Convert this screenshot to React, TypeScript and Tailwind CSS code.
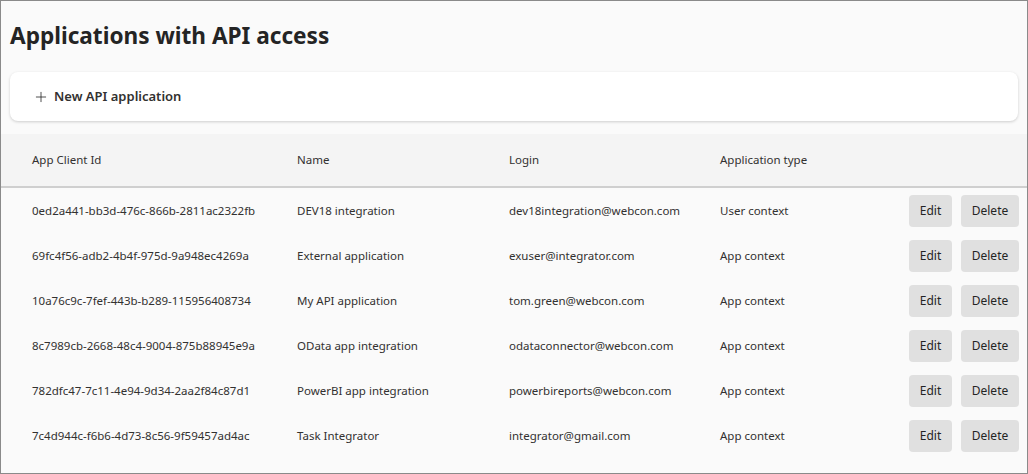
import { Plus } from "lucide-react";

const rows = [
  ["0ed2a441-bb3d-476c-866b-2811ac2322fb", "DEV18 integration", "dev18integration@webcon.com", "User context"],
  ["69fc4f56-adb2-4b4f-975d-9a948ec4269a", "External application", "exuser@integrator.com", "App context"],
  ["10a76c9c-7fef-443b-b289-115956408734", "My API application", "tom.green@webcon.com", "App context"],
  ["8c7989cb-2668-48c4-9004-875b88945e9a", "OData app integration", "odataconnector@webcon.com", "App context"],
  ["782dfc47-7c11-4e94-9d34-2aa2f84c87d1", "PowerBI app integration", "powerbireports@webcon.com", "App context"],
  ["7c4d944c-f6b6-4d73-8c56-9f59457ad4ac", "Task Integrator", "integrator@gmail.com", "App context"],
];

const cols = "grid grid-cols-[265px_212px_211px_1fr_auto] items-center";

export default function App() {
  return (
    <div className="w-[1028px] h-[474px] overflow-hidden border border-[#8a8a8a] bg-[#fafafa] text-[#242424] font-['Segoe_UI','Noto_Sans',sans-serif]">
      <h1 className="px-[9px] pt-[20px] text-[22.6px] leading-[30px] font-bold">Applications with API access</h1>

      <div className="mx-[9px] mt-[21px] h-[49px] rounded-lg bg-white shadow-[0_1px_3px_rgba(0,0,0,0.18)] flex items-center pl-[23px]">
        <button className="flex items-center gap-[5px] text-[13px] font-semibold text-[#323130]">
          <Plus className="w-[16px] h-[16px] text-[#242424]" strokeWidth={1.2} />
          New API application
        </button>
      </div>

      <div className="mt-[13px]">
        <div className={`${cols} h-[54px] bg-[#f4f4f4] border-b-2 border-[#cfcfcf] pl-[31px] text-[11.5px] text-[#323130]`}>
          <div>App Client Id</div>
          <div>Name</div>
          <div>Login</div>
          <div>Application type</div>
          <div />
        </div>
        {rows.map((r) => (
          <div key={r[0]} className={`${cols} h-[45px] pl-[31px] pr-[8px] pt-[1px] text-[11.5px] text-[#323130]`}>
            <div>{r[0]}</div>
            <div>{r[1]}</div>
            <div>{r[2]}</div>
            <div>{r[3]}</div>
            <div className="flex gap-[9px]">
              <button className="h-[32px] w-[43px] rounded bg-[#e0e0e0] text-[12px] text-[#242424]">Edit</button>
              <button className="h-[32px] w-[58px] rounded bg-[#e0e0e0] text-[12px] text-[#242424]">Delete</button>
            </div>
          </div>
        ))}
      </div>
    </div>
  );
}
